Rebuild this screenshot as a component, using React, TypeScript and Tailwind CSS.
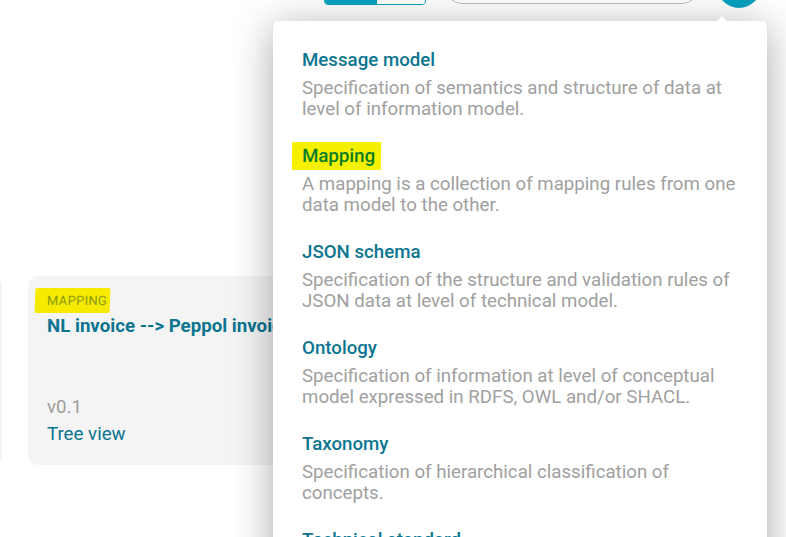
import { useState } from 'react'

const types = [
  {
    name: 'Message model',
    description: 'Specification of semantics and structure of data at level of information model.',
  },
  {
    name: 'Mapping',
    description: 'A mapping is a collection of mapping rules from one data model to the other.',
    marked: true,
  },
  {
    name: 'JSON schema',
    description: 'Specification of the structure and validation rules of JSON data at level of technical model.',
  },
  {
    name: 'Ontology',
    description: 'Specification of information at level of conceptual model expressed in RDFS, OWL and/or SHACL.',
  },
  {
    name: 'Taxonomy',
    description: 'Specification of hierarchical classification of concepts.',
  },
  {
    name: 'Technical standard',
    description: 'Specification of technical agreements.',
  },
]

export default function App() {
  const [open] = useState(true)

  return (
    <div
      className="relative w-[786px] h-[537px] overflow-hidden bg-white"
      style={{ fontFamily: 'Roboto, "Liberation Sans", sans-serif' }}
    >
      {/* Header (mostly scrolled out of view) */}
      <div className="flex items-end h-[8px]">
        <div className="flex items-end shrink-0 ml-[324px] h-[44px]">
          <div className="flex h-[40px] mb-[3px] rounded-[4px] border border-[#08a0c0] overflow-hidden">
            <div className="w-[52px] bg-[#08a0c0]"></div>
            <div className="w-[48px] bg-white"></div>
          </div>
          <div className="w-[258px] h-[40px] ml-[17px] mb-[4px] rounded-full border border-[#bdbdbd] bg-white"></div>
          <div className="w-[44px] h-[44px] ml-[16px] rounded-full bg-[#08a0c0]"></div>
        </div>
      </div>

      {/* Cards */}
      <div className="flex gap-[26px] mt-[268px] -ml-[260px]">
        <div className="shrink-0 w-[262px] h-[189px] rounded-[10px] bg-[#f4f4f4]"></div>
        <div className="shrink-0 w-[320px] h-[189px] rounded-[10px] bg-[#f4f4f4] pt-[12px] px-[19px] overflow-hidden">
          <span className="inline-block -ml-[12px] pl-[12px] pr-[3px] py-[3px] bg-[#f5ea00] -skew-x-2 rounded-[2px] text-[13px] leading-[19px] tracking-[0.3px] text-[#8a9a10]">
            MAPPING
          </span>
          <div className="mt-[1px] text-[18.7px] leading-[24px] font-bold text-[#0b7590] whitespace-nowrap">
            NL invoice --&gt; Peppol invoice
          </div>
          <div className="mt-[56px] text-[18.7px] leading-[27px] text-[#9e9e9e]">v0.1</div>
          <div className="text-[18.7px] leading-[27px] text-[#0b7590]">Tree view</div>
        </div>
      </div>

      {/* Dropdown menu */}
      {open && (
        <div className="absolute left-[273px] top-[21px] w-[494px] h-[560px] rounded-[5px] bg-white shadow-[0_6px_40px_rgba(0,0,0,0.34)]">
          <div className="absolute -top-[5px] left-[443px] w-0 h-0 border-x-[6px] border-x-transparent border-b-[6px] border-b-white"></div>
          <div className="flex flex-col gap-[24px] pt-[27px] pl-[29px] pr-[24px]">
            {types.map((t) => (
              <div key={t.name}>
                <div className="h-[24px] flex items-center">
                  {t.marked ? (
                    <span className="-ml-[10px] pl-[10px] pr-[6px] py-[2px] bg-[#f5f000] -skew-x-1 text-[18.7px] leading-[24px] font-medium text-[#0b7d24]">
                      {t.name}
                    </span>
                  ) : (
                    <span className="text-[18.7px] leading-[24px] font-medium text-[#0b7590]">{t.name}</span>
                  )}
                </div>
                <p className="mt-[6px] text-[18.7px] leading-[21px] text-[#a0a0a0]">{t.description}</p>
              </div>
            ))}
          </div>
        </div>
      )}
    </div>
  )
}
